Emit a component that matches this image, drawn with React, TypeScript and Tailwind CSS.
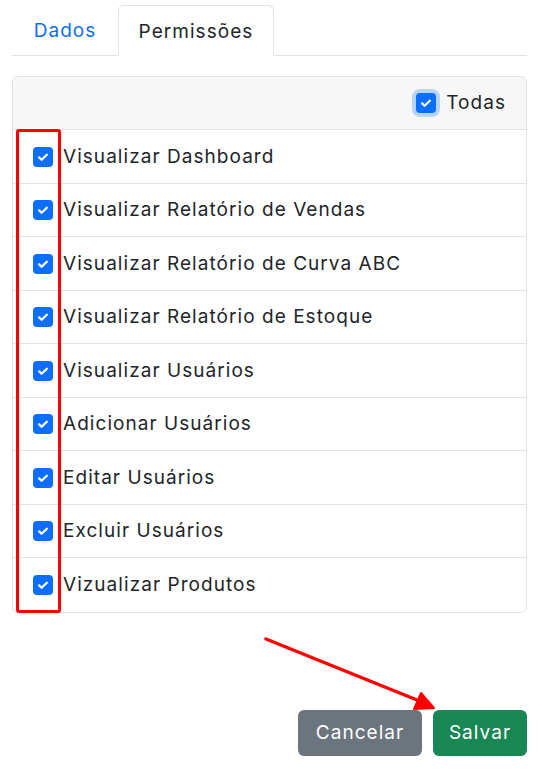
import React from "react";

const items = [
  "Visualizar Dashboard",
  "Visualizar Relatório de Vendas",
  "Visualizar Relatório de Curva ABC",
  "Visualizar Relatório de Estoque",
  "Visualizar Usuários",
  "Adicionar Usuários",
  "Editar Usuários",
  "Excluir Usuários",
  "Vizualizar Produtos",
];

function Check({ focus = false }: { focus?: boolean }) {
  return (
    <span
      className={
        "flex h-[20px] w-[20px] shrink-0 items-center justify-center rounded-[4px] bg-[#0d6efd] " +
        (focus ? "ring-[4px] ring-[#b6d4fe]" : "")
      }
    >
      <svg width="14" height="14" viewBox="0 0 20 20" fill="none">
        <path d="M4.5 10.5l3.5 3.4L15.5 6.8" stroke="white" strokeWidth="3.2" strokeLinecap="round" strokeLinejoin="round" />
      </svg>
    </span>
  );
}

export default function App() {
  return (
    <div
      className="relative h-[772px] w-[543px] bg-white text-[19px] tracking-[0.055em] text-[#212529]"
      style={{ fontFamily: "Inter, 'Noto Sans', sans-serif" }}
    >
      <div className="px-[12px] pt-[5px] pr-[16px]">
        <div className="flex border-b border-[#dee2e6]">
          <div className="flex h-[50px] w-[106px] items-center justify-center pt-[3px] text-[#0d6efd]">Dados</div>
          <div className="-mb-px flex h-[51px] w-[156px] items-center justify-center rounded-t-[6px] border border-b-white border-[#dee2e6] bg-white pt-[3px]">
            Permissões
          </div>
        </div>
      </div>
      <div className="px-[12px] pt-[20px] pr-[16px]">
        <div className="overflow-hidden rounded-[6px] border border-[#dee2e6]">
          <div className="flex h-[53px] items-center justify-end gap-[10px] border-b border-[#dee2e6] bg-[#f7f7f7] pr-[20px]">
            <Check focus />
            <span>Todas</span>
          </div>
          {items.map((t, i) => (
            <div
              key={t}
              className={
                "flex h-[53.5px] items-center gap-[10px] pl-[20px] pt-[1px] " +
                (i < items.length - 1 ? "border-b border-[#dee2e6]" : "")
              }
            >
              <Check />
              <span>{t}</span>
            </div>
          ))}
        </div>
      </div>
      <div className="flex justify-end gap-[11px] pr-[16px] pt-[97px]">
        <button className="h-[46px] w-[124px] rounded-[6px] bg-[#6c757d] pt-[1px] text-white">Cancelar</button>
        <button className="h-[46px] w-[94px] rounded-[6px] bg-[#198754] pt-[1px] text-white">Salvar</button>
      </div>

      <div className="pointer-events-none absolute left-[16px] top-[129px] h-[484px] w-[45px] rounded-[3px] border-[3px] border-[#ff0000]" />
      <svg className="pointer-events-none absolute left-0 top-0" width="543" height="772">
        <line x1="266" y1="639" x2="422" y2="702" stroke="#ff0000" strokeWidth="3.5" strokeLinecap="round" />
        <path d="M434 708 L414 709 L421 693 Z" fill="#ff0000" stroke="#ff0000" strokeWidth="2" strokeLinejoin="round" />
      </svg>
    </div>
  );
}
